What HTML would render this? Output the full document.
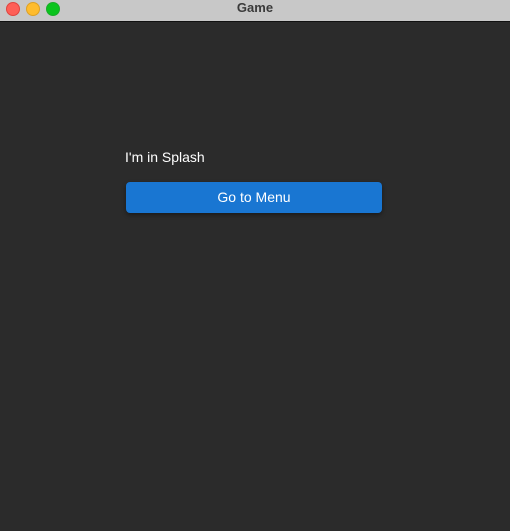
<!DOCTYPE html>
<html><head><style>
body{margin:0;width:510px;height:531px;background:#2b2b2b;font-family:"Liberation Sans",sans-serif;overflow:hidden;position:relative}
.bar{position:absolute;left:0;top:0;width:510px;height:21px;background:#c8c8c8;border-bottom:1px solid #111}
.dot{position:absolute;top:2px;width:12px;height:12px;border-radius:50%}
.t{position:absolute;left:0;width:510px;top:0;line-height:16px;text-align:center;font-weight:bold;font-size:13px;color:#3a3a3a}
.lbl{position:absolute;left:125px;top:149px;font-size:14px;color:#fff}
.btn{position:absolute;left:126px;top:182px;width:256px;height:31px;background:#1976d2;border-radius:4px;box-shadow:0 2px 4px rgba(0,0,0,.4);color:#fff;font-size:14px;text-align:center;line-height:31px}
</style></head><body>
<div class="bar">
<div class="dot" style="left:6px;background:#fe5f57;border:0.5px solid #e0443e"></div>
<div class="dot" style="left:26px;background:#febc2e;border:0.5px solid #dea123"></div>
<div class="dot" style="left:46px;background:#28c840;background:#0ac41d;border:0.5px solid #1aab29"></div>
<div class="t">Game</div>
</div>
<div class="lbl">I'm in Splash</div>
<div class="btn">Go to Menu</div>
</body></html>
